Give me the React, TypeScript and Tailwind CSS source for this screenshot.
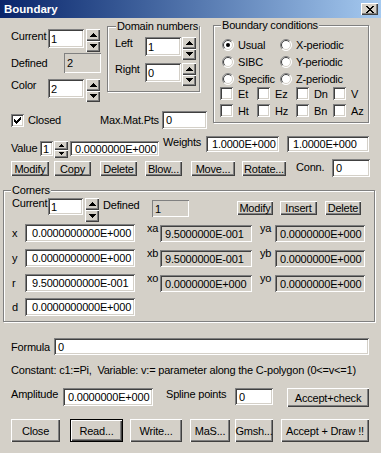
import React from "react";

const sunken =
  "bg-white shadow-[inset_1px_1px_0_#808080,inset_-1px_-1px_0_#ffffff,inset_2px_2px_0_#404040,inset_-2px_-2px_0_#d4d0c8]";
const sunkenGray =
  "bg-[#d4d0c8] shadow-[inset_1px_1px_0_#808080,inset_-1px_-1px_0_#ffffff,inset_2px_2px_0_#404040,inset_-2px_-2px_0_#d4d0c8]";
const staticEdge = "bg-[#d4d0c8] shadow-[inset_1px_1px_0_#808080,inset_-1px_-1px_0_#ffffff]";
const raised =
  "bg-[#d4d0c8] shadow-[inset_1px_1px_0_#ffffff,inset_-1px_-1px_0_#404040,inset_-2px_-2px_0_#808080]";
const defRaised =
  "bg-[#d4d0c8] shadow-[inset_0_0_0_1px_#000000,inset_2px_2px_0_#ffffff,inset_-2px_-2px_0_#404040,inset_-3px_-3px_0_#808080]";
const etched = "border border-[#808080] shadow-[1px_1px_0_#ffffff,inset_1px_1px_0_#ffffff]";

function Field({
  className = "",
  kind = "white",
  children,
}: {
  className?: string;
  kind?: "white" | "gray" | "static";
  children?: React.ReactNode;
}) {
  const s = kind === "white" ? sunken : kind === "gray" ? sunkenGray : staticEdge;
  return <div className={`shrink-0 flex items-center overflow-hidden ${s} ${className}`}>{children}</div>;
}

function Btn({ className = "", def = false, children }: { className?: string; def?: boolean; children?: React.ReactNode }) {
  return (
    <div className={`shrink-0 flex items-center justify-center ${def ? defRaised : raised} ${className}`}>{children}</div>
  );
}

function Arrow({ down, small }: { down?: boolean; small?: boolean }) {
  if (small) {
    return (
      <svg width="5" height="3" viewBox="0 0 5 3" shapeRendering="crispEdges">
        <path d={down ? "M0 0h5v1h-5z M1 1h3v1h-3z M2 2h1v1h-1z" : "M2 0h1v1h-1z M1 1h3v1h-3z M0 2h5v1h-5z"} fill="#000" />
      </svg>
    );
  }
  return (
    <svg width="7" height="4" viewBox="0 0 7 4" shapeRendering="crispEdges">
      <path
        d={
          down
            ? "M0 0h7v1h-7z M1 1h5v1h-5z M2 2h3v1h-3z M3 3h1v1h-1z"
            : "M3 0h1v1h-1z M2 1h3v1h-3z M1 2h5v1h-5z M0 3h7v1h-7z"
        }
        fill="#000"
      />
    </svg>
  );
}

function Spinner({ className = "", small }: { className?: string; small?: boolean }) {
  return (
    <div className={`shrink-0 flex flex-col ${className}`}>
      <div className={`flex-1 flex items-center justify-center ${raised}`}>
        <Arrow small={small} />
      </div>
      <div className={`flex-1 flex items-center justify-center ${raised}`}>
        <Arrow down small={small} />
      </div>
    </div>
  );
}

function Check({ checked }: { checked?: boolean }) {
  return (
    <div className={`shrink-0 w-[13px] h-[13px] flex items-center justify-center ${sunken}`}>
      {checked && (
        <svg width="7" height="7" viewBox="0 0 7 7" shapeRendering="crispEdges">
          <path
            d="M6 0h1v1h-1z M5 1h2v1h-2z M0 2h1v1h-1z M4 2h3v1h-3z M0 3h2v1h-2z M3 3h3v1h-3z M0 4h5v1h-5z M1 5h3v1h-3z M2 6h1v1h-1z"
            fill="#000"
          />
        </svg>
      )}
    </div>
  );
}

function Radio({ checked }: { checked?: boolean }) {
  return (
    <svg width="12" height="12" viewBox="0 0 12 12" className="shrink-0">
      <circle cx="6" cy="6" r="5.5" fill="#fff" />
      <path d="M2.1 9.9 A5.5 5.5 0 0 1 9.9 2.1" stroke="#808080" fill="none" />
      <path d="M9.9 2.1 A5.5 5.5 0 0 1 2.1 9.9" stroke="#ffffff" fill="none" />
      <path d="M2.8 9.2 A4.5 4.5 0 0 1 9.2 2.8" stroke="#404040" fill="none" />
      <path d="M9.2 2.8 A4.5 4.5 0 0 1 2.8 9.2" stroke="#d4d0c8" fill="none" />
      {checked && <circle cx="6" cy="6" r="2" fill="#000" />}
    </svg>
  );
}

function GroupTitle({ children, className = "" }: { children: React.ReactNode; className?: string }) {
  return <div className={`-mt-[7px] px-[1px] w-fit bg-[#d4d0c8] leading-[13px] ${className}`}>{children}</div>;
}

function CornerRow({
  l,
  v,
  l2,
  v2,
  l3,
  v3,
  className = "",
}: {
  l: string;
  v: string;
  l2?: string;
  v2?: string;
  l3?: string;
  v3?: string;
  className?: string;
}) {
  return (
    <div className={`flex items-start h-[18px] ${className}`}>
      <span className="ml-[8px] w-[13px] h-[18px] flex items-center shrink-0">{l}</span>
      <Field className="w-[110px] h-[18px] pl-[7px]">{v}</Field>
      {l2 && (
        <>
          <span className="ml-[12px] w-[13px] -mt-[1px] leading-[11px] shrink-0">{l2}</span>
          <Field kind="gray" className="mt-[1px] w-[92px] h-[17px] pl-[5px]">
            {v2}
          </Field>
          <span className="ml-[8px] w-[15px] -mt-[1px] leading-[11px] shrink-0">{l3}</span>
          <Field kind="gray" className="mt-[1px] w-[90px] h-[17px] pl-[5px]">
            {v3}
          </Field>
        </>
      )}
    </div>
  );
}

export default function App() {
  return (
    <div className="w-[381px] h-[453px] bg-[#d4d0c8] text-black text-[11px] tracking-[-0.2px] leading-[14px] whitespace-nowrap overflow-hidden flex flex-col font-['Liberation_Sans',Arial,sans-serif]">
      {/* Title bar */}
      <div className="h-[18px] shrink-0 flex items-center bg-linear-to-r from-[#0a246a] to-[#a6caf0]">
        <span className="ml-[4px] text-white font-bold text-[11.5px] tracking-normal leading-[18px]">Boundary</span>
        <div className={`ml-auto mr-[3px] w-[17px] h-[12px] flex items-center justify-center ${raised}`}>
          <svg width="8" height="7" viewBox="0 0 8 7" shapeRendering="crispEdges">
            <path
              d="M0 0h2v1h-2z M6 0h2v1h-2z M1 1h2v1h-2z M5 1h2v1h-2z M2 2h4v1h-4z M3 3h2v1h-2z M2 4h4v1h-4z M1 5h2v1h-2z M5 5h2v1h-2z M0 6h2v1h-2z M6 6h2v1h-2z"
              fill="#000"
            />
          </svg>
        </div>
      </div>

      {/* Section A */}
      <div className="flex h-[118px] shrink-0">
        <div className="w-[213px] flex flex-col shrink-0">
          <div className="flex h-[93px]">
            <div className="w-[107px] pl-[11px] pt-[11px] flex flex-col shrink-0">
              <div className="flex h-[23px]">
                <span className="w-[37px] leading-[15px] shrink-0">Current</span>
                <Field className="w-[36px] h-[19px] pl-[3px]">1</Field>
                <Spinner className="ml-[2px] w-[14px] h-[23px]" />
              </div>
              <div className="flex mt-[1px] h-[20px] items-center">
                <span className="w-[53px] shrink-0">Defined</span>
                <Field kind="static" className="w-[37px] h-[20px] pl-[3px]">
                  2
                </Field>
              </div>
              <div className="flex mt-[6px] h-[23px]">
                <span className="w-[37px] leading-[13px] shrink-0">Color</span>
                <Field className="w-[36px] h-[19px] pl-[3px]">2</Field>
                <Spinner className="ml-[2px] w-[14px] h-[23px]" />
              </div>
            </div>
            <div className={`mt-[8px] w-[93px] h-[66px] shrink-0 ${etched}`}>
              <GroupTitle className="ml-[8px]">Domain numbers</GroupTitle>
              <div className="flex mt-[4px] pl-[7px] h-[23px]">
                <span className="w-[30px] leading-[13px] shrink-0">Left</span>
                <Field className="w-[36px] h-[19px] pl-[3px]">1</Field>
                <Spinner className="ml-[1px] w-[14px] h-[23px]" />
              </div>
              <div className="flex mt-[3px] pl-[7px] h-[23px]">
                <span className="w-[30px] leading-[13px] shrink-0">Right</span>
                <Field className="w-[36px] h-[19px] pl-[3px]">0</Field>
                <Spinner className="ml-[1px] w-[14px] h-[23px]" />
              </div>
            </div>
          </div>
          <div className="flex h-[18px] items-center">
            <div className="ml-[11px]">
              <Check checked />
            </div>
            <span className="ml-[4px] w-[72px] shrink-0">Closed</span>
            <span className="w-[62px] shrink-0">Max.Mat.Pts</span>
            <Field className="w-[45px] h-[18px] pl-[4px]">0</Field>
          </div>
        </div>

        <div className={`mt-[7px] w-[156px] h-[98px] shrink-0 ${etched}`}>
          <GroupTitle className="ml-[7px]">Boundary conditions</GroupTitle>
          <div className="mt-[4px] pl-[8px] flex flex-col">
            <div className="flex h-[17px] items-center">
              <div className="w-[58px] flex items-center gap-[4px] shrink-0">
                <Radio checked />
                <span>Usual</span>
              </div>
              <div className="flex items-center gap-[4px]">
                <Radio />
                <span>X-periodic</span>
              </div>
            </div>
            <div className="flex h-[17px] items-center">
              <div className="w-[58px] flex items-center gap-[4px] shrink-0">
                <Radio />
                <span>SIBC</span>
              </div>
              <div className="flex items-center gap-[4px]">
                <Radio />
                <span>Y-periodic</span>
              </div>
            </div>
            <div className="flex h-[17px] items-center">
              <div className="w-[58px] flex items-center gap-[4px] shrink-0">
                <Radio />
                <span>Specific</span>
              </div>
              <div className="flex items-center gap-[4px]">
                <Radio />
                <span>Z-periodic</span>
              </div>
            </div>
          </div>
          <div className="pl-[6px] flex flex-col">
            {[
              ["Et", "Ez", "Dn", "V"],
              ["Ht", "Hz", "Bn", "Az"],
            ].map((row, i) => (
              <div key={i} className="flex h-[17px] items-start">
                <div className="w-[37px] h-[13px] flex items-center gap-[5px] shrink-0">
                  <Check />
                  <span>{row[0]}</span>
                </div>
                <div className="w-[39px] h-[13px] flex items-center gap-[5px] shrink-0">
                  <Check />
                  <span>{row[1]}</span>
                </div>
                <div className="w-[37px] h-[13px] flex items-center gap-[5px] shrink-0">
                  <Check />
                  <span>{row[2]}</span>
                </div>
                <div className="h-[13px] flex items-center gap-[5px]">
                  <Check />
                  <span>{row[3]}</span>
                </div>
              </div>
            ))}
          </div>
        </div>
      </div>

      {/* Value row */}
      <div className="flex h-[22px] items-start shrink-0">
        <span className="ml-[11px] w-[29px] mt-[5px] leading-[15px] shrink-0">Value</span>
        <Field className="mt-[5px] w-[13px] h-[15px] pl-[3px]">1</Field>
        <Spinner small className="ml-[1px] mt-[5px] w-[14px] h-[17px]" />
        <Field className="ml-[2px] mt-[5px] w-[89px] h-[15px] pl-[5px]">0.0000000E+000</Field>
        <span className="ml-[4px] w-[43px] leading-[13px] shrink-0">Weights</span>
        <Field className="w-[73px] h-[16px] pl-[6px]">1.0000E+000</Field>
        <Field className="ml-[8px] w-[82px] h-[16px] pl-[6px]">1.0000E+000</Field>
      </div>

      {/* Buttons row */}
      <div className="flex mt-[1px] h-[18px] items-start shrink-0">
        <Btn className="ml-[11px] mt-[2px] w-[38px] h-[15px]">Modify</Btn>
        <Btn className="ml-[5px] mt-[2px] w-[37px] h-[15px]">Copy</Btn>
        <Btn className="ml-[9px] mt-[2px] w-[37px] h-[15px]">Delete</Btn>
        <Btn className="ml-[8px] mt-[2px] w-[37px] h-[15px]">Blow...</Btn>
        <Btn className="ml-[9px] mt-[2px] w-[44px] h-[15px]">Move...</Btn>
        <Btn className="ml-[7px] mt-[2px] w-[44px] h-[15px]">Rotate...</Btn>
        <span className="ml-[10px] w-[36px] leading-[16px] shrink-0">Conn.</span>
        <Field className="w-[38px] h-[18px] pl-[4px]">0</Field>
      </div>

      {/* Corners */}
      <div className={`mt-[13px] ml-[3px] w-[372px] h-[132px] shrink-0 ${etched}`}>
        <GroupTitle className="ml-[7px]">Corners</GroupTitle>
        <div className="flex mt-[1px] h-[24px] items-start">
          <span className="ml-[8px] w-[36px] leading-[11px] shrink-0">Current</span>
          <Field className="w-[35px] h-[17px] pl-[3px]">1</Field>
          <Spinner className="ml-[2px] w-[14px] h-[24px]" />
          <span className="ml-[4px] w-[49px] leading-[15px] shrink-0">Defined</span>
          <Field kind="static" className="mt-[2px] w-[37px] h-[17px] pl-[3px]">
            1
          </Field>
          <Btn className="ml-[48px] mt-[3px] w-[36px] h-[14px]">Modify</Btn>
          <Btn className="ml-[7px] mt-[3px] w-[37px] h-[14px]">Insert</Btn>
          <Btn className="ml-[8px] mt-[3px] w-[36px] h-[14px]">Delete</Btn>
        </div>
        <CornerRow
          className="mt-[2px]"
          l="x"
          v="0.0000000000E+000"
          l2="xa"
          v2="9.5000000E-001"
          l3="ya"
          v3="0.0000000E+000"
        />
        <CornerRow
          className="mt-[7px]"
          l="y"
          v="0.0000000000E+000"
          l2="xb"
          v2="9.5000000E-001"
          l3="yb"
          v3="0.0000000E+000"
        />
        <CornerRow
          className="mt-[7px]"
          l="r"
          v="9.5000000000E-001"
          l2="xo"
          v2="0.0000000E+000"
          l3="yo"
          v3="0.0000000E+000"
        />
        <CornerRow className="mt-[6px]" l="d" v="0.0000000000E+000" />
      </div>

      {/* Formula */}
      <div className="flex mt-[16px] h-[17px] items-center shrink-0">
        <span className="ml-[11px] w-[43px] shrink-0">Formula</span>
        <Field className="w-[315px] h-[17px] pl-[4px]">0</Field>
      </div>
      <div className="mt-[8px] ml-[11px] leading-[14px] shrink-0">
        Constant: c1:=Pi,&nbsp; Variable: v:= parameter along the C-polygon (0&lt;=v&lt;=1)
      </div>

      {/* Amplitude */}
      <div className="flex mt-[11px] h-[19px] items-start shrink-0">
        <span className="ml-[11px] w-[52px] leading-[13px] shrink-0">Amplitude</span>
        <Field className="w-[90px] h-[18px] pl-[5px]">0.0000000E+000</Field>
        <span className="ml-[13px] w-[69px] leading-[13px] shrink-0">Spline points</span>
        <Field className="w-[38px] h-[17px] pl-[4px]">0</Field>
        <Btn className="ml-[14px] w-[82px] h-[19px]">Accept+check</Btn>
      </div>

      {/* Bottom buttons */}
      <div className="flex mt-[12px] h-[23px] items-start shrink-0">
        <Btn className="ml-[11px] w-[49px] h-[23px]">Close</Btn>
        <Btn def className="ml-[10px] w-[53px] h-[23px]">
          Read...
        </Btn>
        <Btn className="ml-[7px] w-[52px] h-[23px]">Write...</Btn>
        <Btn className="ml-[8px] w-[40px] h-[23px]">MaS...</Btn>
        <Btn className="ml-[5px] w-[38px] h-[23px]">Gmsh...</Btn>
        <Btn className="ml-[8px] w-[88px] h-[23px]">Accept + Draw !!</Btn>
      </div>
    </div>
  );
}
